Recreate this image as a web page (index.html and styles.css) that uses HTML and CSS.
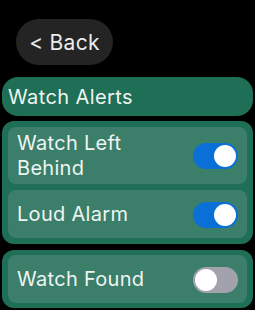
FILE: index.html
```html
<!DOCTYPE html>
<html lang="en">
<head>
    <meta charset="UTF-8">
    <meta name="viewport" content="width=device-width, initial-scale=1.0">
    <title>Watch Alerts</title>
    <link rel="stylesheet" href="styles.css">
</head>
<body>

<!-- Back button -->
<button class="back-btn">&lt; Back</button>

<!-- Alerts section -->
<div class="section-title">Watch Alerts</div>

<div class="group">
    <div class="row">
        <span class="label">Watch Left Behind</span>
        <span class="toggle on"><span class="knob"></span></span>
    </div>
    <div class="row">
        <span class="label">Loud Alarm</span>
        <span class="toggle on"><span class="knob"></span></span>
    </div>
</div>

<div class="group second">
    <div class="row">
        <span class="label">Watch Found</span>
        <span class="toggle"><span class="knob"></span></span>
    </div>
</div>

</body>
</html>
```

FILE: styles.css
```css
body {
    margin: 0;
    padding: 19px 2px 0 2px;
    background-color: #000;
    font-family: "Inter", "Liberation Sans", sans-serif;
    color: #eef5f1;
    overflow: hidden;
}
.back-btn {
    display: block;
    margin-left: 14px;
    width: 97px;
    height: 46px;
    border: none;
    border-radius: 23px;
    background-color: #242424;
    color: #ececec;
    font-family: inherit;
    font-size: 21px;
    letter-spacing: 0.3px;
    padding: 0;
}
.section-title {
    margin-top: 12px;
    height: 39px;
    box-sizing: border-box;
    padding-left: 6px;
    display: flex;
    align-items: center;
    background-color: #1f6e56;
    border-radius: 16px;
    font-size: 20px;
    letter-spacing: 0.4px;
}
.group {
    margin-top: 5px;
    padding: 6px;
    background-color: #1f6e56;
    border-radius: 12px;
    display: flex;
    flex-direction: column;
    gap: 6px;
}
.group.second {
    margin-top: 6px;
    padding: 5px 6px;
}
.row {
    min-height: 48px;
    box-sizing: border-box;
    padding: 4px 9px 3px 9px;
    display: flex;
    align-items: center;
    justify-content: space-between;
    background-color: #3b7e6a;
    border-radius: 8px;
}
.label {
    max-width: 130px;
    font-size: 20px;
    line-height: 25px;
    letter-spacing: 0.3px;
}
.toggle {
    width: 45px;
    height: 26px;
    border-radius: 13px;
    background-color: #a2a2ac;
    position: relative;
    flex-shrink: 0;
}
.toggle.on {
    background-color: #0b6fd8;
}
.knob {
    position: absolute;
    top: 2px;
    left: 2px;
    width: 22px;
    height: 22px;
    border-radius: 50%;
    background-color: #fff;
}
.toggle.on .knob {
    left: 21px;
}
```
